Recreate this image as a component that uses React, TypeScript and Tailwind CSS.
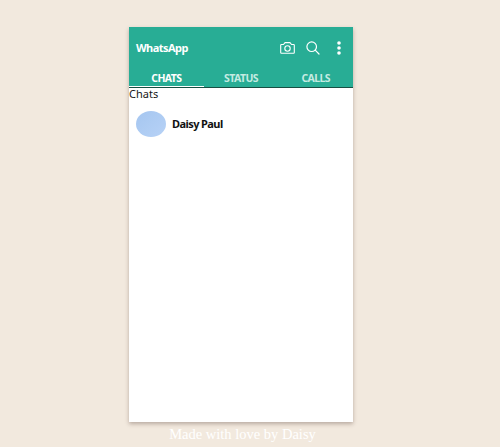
const tabs = ["CHATS", "STATUS", "CALLS"];

function CameraIcon() {
  return (
    <svg className="h-3.5 w-[15px]" viewBox="0 0 15 14" fill="none" stroke="white" strokeWidth="1.1" strokeLinejoin="round">
      <path d="M1.4 3.5H3.5L5 1.6H10L11.5 3.5H13.6Q14.3 3.5 14.3 4.2V11.6Q14.3 12.3 13.6 12.3H1.4Q.7 12.3 .7 11.6V4.2Q.7 3.5 1.4 3.5Z" />
      <circle cx="7.5" cy="7.5" r="2.7" />
    </svg>
  );
}

function SearchIcon() {
  return (
    <svg className="h-3.5 w-3.5" viewBox="0 0 14 14" fill="none" stroke="white" strokeWidth="1.2" strokeLinecap="round">
      <circle cx="5.7" cy="5.7" r="4.8" />
      <path d="m9.2 9.2 3.8 3.8" />
    </svg>
  );
}

function MoreIcon() {
  return (
    <svg className="h-3.5 w-1" viewBox="0 0 4 14" fill="white">
      <circle cx="2" cy="2" r="1.8" />
      <circle cx="2" cy="7" r="1.8" />
      <circle cx="2" cy="12" r="1.8" />
    </svg>
  );
}

export default function App() {
  return (
    <div className="flex h-[447px] flex-col items-center overflow-hidden bg-[#f2e9de] pt-[27px] pr-[18px]">
      <main className="flex h-[395px] w-[224px] shrink-0 flex-col bg-white font-['Noto_Sans',sans-serif] shadow-[0_2px_4px_rgba(80,55,45,0.35)]">
        <header className="flex h-[61px] shrink-0 flex-col border-b border-[#174f43] bg-[#28ad95] text-white">
          <div className="flex h-[42px] items-center pl-[7px] pr-[12.5px]">
            <h1 className="flex-1 text-[11px] font-bold tracking-[-0.55px]">WhatsApp</h1>
            <div className="flex items-center">
              <CameraIcon />
              <div className="pl-[11px]"><SearchIcon /></div>
              <div className="pl-[16.5px]"><MoreIcon /></div>
            </div>
          </div>
          <nav className="grid flex-1 grid-cols-3 text-center text-[10.5px] font-bold leading-[18px] tracking-[-0.6px]">
            {tabs.map((tab, index) => (
              <div key={tab} className={index === 0 ? "h-[18px] border-b-[1.5px] border-white" : "h-[18px] text-[#c5ebe2]"}>{tab}</div>
            ))}
          </nav>
        </header>
        <p className="h-[15px] text-[11px] leading-[12px] text-[#171717]">Chats</p>
        <div className="flex items-center gap-1.5 pl-[7px] pt-2">
          <div className="h-[26px] w-[30px] rounded-[50%] bg-linear-to-br from-[#a5c6f0] to-[#b7d2f6]" />
          <span className="text-[11px] font-bold tracking-[-0.58px] text-[#111]">Daisy Paul</span>
        </div>
      </main>
      <footer className="mt-1 pl-[3px] font-['Liberation_Serif',serif] text-[14.5px] leading-[17px] text-white">Made with love by Daisy</footer>
    </div>
  );
}
